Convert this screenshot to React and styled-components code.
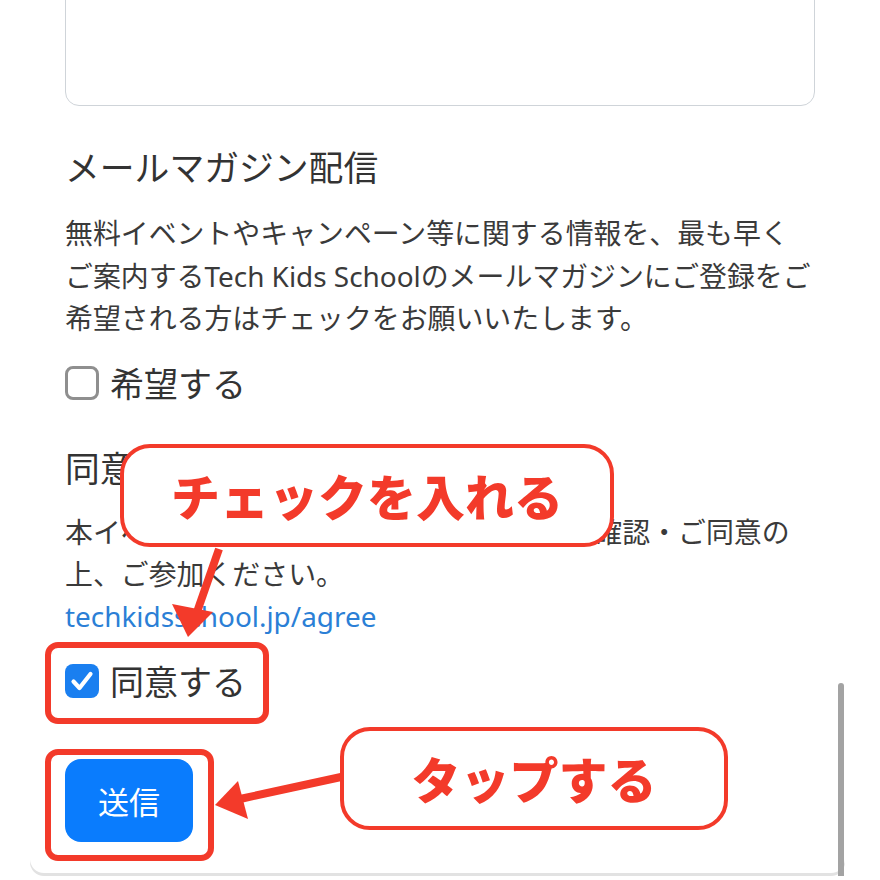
import React from "react";
import styled, { createGlobalStyle } from "styled-components";

const GlobalStyle = createGlobalStyle`
  html, body {
    margin: 0;
    padding: 0;
    background: #ffffff;
  }
  body {
    font-family: "Noto Sans", "Noto Sans CJK JP", sans-serif;
    color: #333333;
  }
`;

const Page = styled.div`
  position: relative;
  width: 880px;
  height: 880px;
  overflow: hidden;
  background: #ffffff;
`;

const Card = styled.div`
  position: relative;
  box-sizing: border-box;
  width: 815px;
  margin: -100px 0 0 30px;
  padding: 0 30px 31px 35px;
  background: #ffffff;
  border-radius: 0 0 14px 14px;
  box-shadow: 0 3px 0 #e2e2e2;
  display: flex;
  flex-direction: column;
`;

const TextArea = styled.div`
  box-sizing: border-box;
  width: 750px;
  height: 206px;
  border: 1.5px solid #cfd4d9;
  border-radius: 14px;
  background: #ffffff;
`;

const Heading = styled.h2`
  margin: ${(p) => p.mt}px 0 0;
  font-size: 34.8px;
  line-height: 46px;
  font-weight: 400;
  color: #333333;
  white-space: nowrap;
`;

const Paragraph = styled.p`
  margin: ${(p) => p.mt}px 0 0;
  font-size: 27.9px;
  line-height: ${(p) => p.lh}px;
  color: #3a3a3a;
  white-space: nowrap;
`;

const Link = styled.a`
  color: #2b7fd6;
  text-decoration: none;
`;

const CheckRow = styled.label`
  display: flex;
  align-items: center;
  gap: 11px;
  height: 46px;
  margin-top: ${(p) => p.mt}px;
  font-size: 34px;
  color: #333333;
`;

const Box = styled.span`
  box-sizing: border-box;
  width: 34px;
  height: 34px;
  border-radius: 8px;
  display: flex;
  align-items: center;
  justify-content: center;
  background: ${(p) => (p.checked ? "#1a7ff0" : "#ffffff")};
  border: ${(p) => (p.checked ? "none" : "3px solid #8f8f8f")};
`;

const SubmitButton = styled.button`
  margin-top: 55px;
  width: 128px;
  height: 83px;
  border: 0;
  border-radius: 16px;
  background: #0a7cfd;
  color: #ffffff;
  font-family: "Noto Sans CJK JP", sans-serif;
  font-size: 31px;
  align-self: flex-start;
`;

const Scrollbar = styled.div`
  position: absolute;
  right: 1px;
  bottom: -3px;
  width: 6px;
  height: 193px;
  background: #a3a3a3;
  border-radius: 3px 3px 0 0;
`;

const Frame = styled.div`
  position: absolute;
  box-sizing: border-box;
  left: ${(p) => p.x}px;
  top: ${(p) => p.y}px;
  width: ${(p) => p.w}px;
  height: ${(p) => p.h}px;
  border: 6px solid #f33a2a;
  border-radius: 13px;
`;

const Callout = styled.div`
  position: absolute;
  box-sizing: border-box;
  left: ${(p) => p.x}px;
  top: ${(p) => p.y}px;
  width: ${(p) => p.w}px;
  height: 103px;
  border: 4px solid #f33a2a;
  border-radius: 30px;
  background: #ffffff;
  display: flex;
  align-items: center;
  justify-content: center;
  font-family: "Noto Sans CJK JP", sans-serif;
  font-weight: 900;
  font-size: 49px;
  color: #f33a2a;
  padding-bottom: 2px;
`;

const Arrows = styled.svg`
  position: absolute;
  left: 0;
  top: 0;
  pointer-events: none;
`;

const Check = () => (
  <svg width="34" height="34" viewBox="0 0 34 34">
    <path
      d="M8.5 17.5l6 6.5L25.5 10"
      fill="none"
      stroke="#ffffff"
      strokeWidth="4.2"
      strokeLinecap="round"
      strokeLinejoin="round"
    />
  </svg>
);

export default function App() {
  return (
    <Page>
      <GlobalStyle />
      <Card>
        <TextArea />
        <Heading mt={39}>メールマガジン配信</Heading>
        <Paragraph mt={21} lh={42.5}>
          無料イベントやキャンペーン等に関する情報を、最も早く
          <br />
          ご案内するTech Kids Schoolのメールマガジンにご登録をご
          <br />
          希望される方はチェックをお願いいたします。
        </Paragraph>
        <CheckRow mt={20}>
          <Box />
          希望する
        </CheckRow>
        <Heading mt={40}>同意事項</Heading>
        <Paragraph mt={19} lh={42}>
          本イベントの参加規約を以下のページでご確認・ご同意の
          <br />
          上、ご参加ください。
          <br />
          <Link href="#">techkidsschool.jp/agree</Link>
        </Paragraph>
        <CheckRow mt={21}>
          <Box checked>
            <Check />
          </Box>
          同意する
        </CheckRow>
        <SubmitButton>送信</SubmitButton>
        <Scrollbar />
      </Card>

      <Frame x={45} y={642} w={224} h={82} />
      <Frame x={45} y={749} w={169} h={112} />

      <Callout x={120} y={444} w={494}>
        チェックを入れる
      </Callout>
      <Callout x={340} y={727} w={388}>
        タップする
      </Callout>

      <Arrows width="880" height="880" viewBox="0 0 880 880">
        <line x1="219" y1="549" x2="197" y2="612" stroke="#f33a2a" strokeWidth="8" />
        <polygon points="188,637 172,604 213,612" fill="#f33a2a" />
        <line x1="341" y1="777" x2="240" y2="799" stroke="#f33a2a" strokeWidth="8" />
        <polygon points="215,805 238,781 248,819" fill="#f33a2a" />
      </Arrows>
    </Page>
  );
}
